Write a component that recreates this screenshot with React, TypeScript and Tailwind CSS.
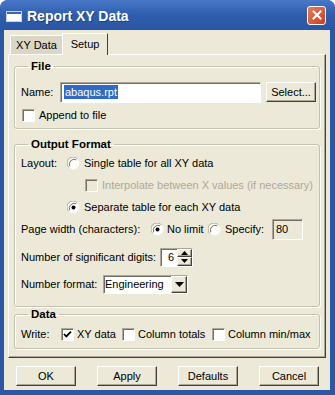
import React from 'react';

const raised =
  'border border-t-white border-l-white border-r-[#404040] border-b-[#404040] shadow-[inset_-1px_-1px_0_#ACA899]';
const sunken =
  'border border-t-[#ACA899] border-l-[#ACA899] border-r-white border-b-white shadow-[inset_1px_1px_0_#716F64]';

function Radio({ checked }: { checked?: boolean }) {
  return (
    <svg width="13" height="13" viewBox="0 0 13 13" className="shrink-0">
      <circle cx="6.5" cy="6.5" r="6" fill="#fff" stroke="#F1EFE2" />
      <path d="M1.7 10.2 A6 6 0 0 1 10.2 1.7" stroke="#ACA899" strokeWidth="1" fill="none" />
      <path d="M2.8 9.2 A4.8 4.8 0 0 1 9.2 2.8" stroke="#716F64" strokeWidth="1" fill="none" />
      {checked && <circle cx="6.5" cy="6.5" r="2" fill="#000" />}
    </svg>
  );
}

function Check({ checked, disabled }: { checked?: boolean; disabled?: boolean }) {
  return (
    <span
      className={`w-[13px] h-[13px] shrink-0 flex items-center justify-center ${sunken} ${
        disabled ? 'bg-[#ECE9D8]' : 'bg-white'
      }`}
    >
      {checked && (
        <svg width="9" height="9" viewBox="0 0 9 9">
          <path d="M1 4 L3.3 6.4 L8 1.6" stroke="#000" strokeWidth="1.8" fill="none" />
        </svg>
      )}
    </span>
  );
}

function Group({ title, className, children }: { title: string; className?: string; children: React.ReactNode }) {
  return (
    <fieldset
      className={`border border-[#C5C2B2] rounded-[3px] shadow-[inset_1px_1px_0_#fff,1px_1px_0_#fff] pl-[6px] ${className ?? ''}`}
    >
      <legend className="ml-[7px] px-[3px] font-bold text-[11.5px] leading-[13px]">{title}</legend>
      {children}
    </fieldset>
  );
}

function Button({ label, className }: { label: string; className?: string }) {
  return (
    <button type="button" className={`bg-[#ECE9D8] flex items-center justify-center ${raised} ${className ?? ''}`}>
      {label}
    </button>
  );
}

export default function App() {
  return (
    <div className="w-[335px] h-[395px] flex flex-col bg-[#2B57A6] rounded-t-[8px] overflow-hidden font-['Liberation_Sans',Arial,sans-serif] text-[11px] leading-[13px] text-black">
      {/* title bar */}
      <div className="h-[30px] shrink-0 flex items-center pl-[6px] pr-[9px] bg-gradient-to-b from-[#4A78C8] via-[#2F5DAE] to-[#2A56A3]">
        <svg width="16" height="11" viewBox="0 0 16 11" className="shrink-0 mt-[2px]">
          <rect x="0.5" y="0.5" width="15" height="10" fill="#fff" stroke="#C8D4EA" />
          <rect x="1" y="1" width="14" height="2" fill="#3A66B8" />
        </svg>
        <span className="ml-[5px] text-white font-bold text-[14px] leading-[16px] mt-[1px] [text-shadow:1px_1px_0_#1B3E80]">
          Report XY Data
        </span>
        <div className="ml-auto w-[19px] h-[19px] rounded-[3px] border border-white bg-gradient-to-br from-[#E8795A] to-[#C7401F] flex items-center justify-center">
          <svg width="10" height="10" viewBox="0 0 10 10">
            <path d="M1.5 1.5 L8.5 8.5 M8.5 1.5 L1.5 8.5" stroke="#fff" strokeWidth="2" strokeLinecap="square" />
          </svg>
        </div>
      </div>

      {/* client area */}
      <div className="flex-1 ml-[4px] mr-[5px] mb-[5px] bg-[#ECE9D8] flex flex-col">
        <div className="h-[24px] flex items-end pl-[6px]">
          <div className="w-[53px] h-[19px] bg-[#DAD7C6] border border-b-0 border-t-white border-l-white border-r-[#ACA899] flex items-center justify-center">
            XY Data
          </div>
          <div className="relative z-10 top-[1px] -ml-[1px] w-[46px] h-[22px] bg-[#ECE9D8] border-t border-l border-r border-t-white border-l-white border-r-[#404040] flex items-center justify-center pb-[1px]">
            Setup
          </div>
        </div>

        <div className="ml-[4px] w-[318px] h-[304px] border border-t-white border-l-white border-r-[#404040] border-b-[#404040] shadow-[inset_-1px_-1px_0_#ACA899] pl-[5px] pt-[5px]">
          <Group title="File" className="w-[306px] pb-[2px]">
            <div className="h-[22px] mt-[8px] flex items-center">
              <span className="w-[39px]">Name:</span>
              <div className={`w-[201px] h-[21px] bg-white flex items-center pl-[3px] ${sunken}`}>
                <span className="bg-[#316AC5] text-white px-[1px] leading-[14px]">abaqus.rpt</span>
              </div>
              <Button label="Select..." className="ml-[5px] w-[50px] h-[20px]" />
            </div>
            <div className="h-[22px] mt-[1px] flex items-center pl-[1px]">
              <Check />
              <span className="ml-[4px]">Append to file</span>
            </div>
          </Group>

          <Group title="Output Format" className="w-[306px] mt-[9px] pb-[11px]">
            <div className="h-[22px] mt-[1px] flex items-center">
              <span className="w-[46px]">Layout:</span>
              <Radio />
              <span className="ml-[4px]">Single table for all XY data</span>
            </div>
            <div className="h-[22px] flex items-center pl-[64px]">
              <Check disabled />
              <span className="ml-[4px] text-[#ACA899]">Interpolate between X values (if necessary)</span>
            </div>
            <div className="h-[22px] flex items-center pl-[46px]">
              <Radio checked />
              <span className="ml-[4px]">Separate table for each XY data</span>
            </div>
            <div className="h-[22px] flex items-center">
              <span className="w-[130px]">Page width (characters):</span>
              <Radio checked />
              <span className="ml-[3px] w-[41px]">No limit</span>
              <Radio />
              <span className="ml-[4px] w-[47px]">Specify:</span>
              <div className={`w-[31px] h-[21px] flex items-center pl-[3px] bg-[#ECE9D8] ${sunken}`}>80</div>
            </div>
            <div className="h-[22px] mt-[6px] flex items-center">
              <span className="w-[139px]">Number of significant digits:</span>
              <div className={`w-[33px] h-[19px] bg-white flex items-stretch ${sunken}`}>
                <span className="flex-1 flex items-center justify-end pr-[3px]">6</span>
                <div className="w-[15px] flex flex-col">
                  <div className={`flex-1 bg-[#ECE9D8] flex items-center justify-center ${raised}`}>
                    <svg width="7" height="4" viewBox="0 0 7 4">
                      <path d="M0 4 L3.5 0 L7 4 Z" fill="#000" />
                    </svg>
                  </div>
                  <div className={`flex-1 bg-[#ECE9D8] flex items-center justify-center ${raised}`}>
                    <svg width="7" height="4" viewBox="0 0 7 4">
                      <path d="M0 0 L3.5 4 L7 0 Z" fill="#000" />
                    </svg>
                  </div>
                </div>
              </div>
            </div>
            <div className="h-[22px] mt-[5px] flex items-center">
              <span className="w-[82px]">Number format:</span>
              <div className={`w-[85px] h-[19px] bg-white flex items-stretch ${sunken}`}>
                <span className="flex-1 flex items-center pl-[1px]">Engineering</span>
                <div className={`w-[16px] bg-[#ECE9D8] flex items-center justify-center ${raised}`}>
                  <svg width="9" height="5" viewBox="0 0 9 5">
                    <path d="M0 0 L4.5 5 L9 0 Z" fill="#000" />
                  </svg>
                </div>
              </div>
            </div>
          </Group>

          <Group title="Data" className="w-[306px] mt-[1px] pb-[3px]">
            <div className="h-[22px] mt-[2px] flex items-center">
              <span className="w-[40px]">Write:</span>
              <Check checked />
              <span className="ml-[3px] w-[45px]">XY data</span>
              <Check />
              <span className="ml-[3px] w-[74px]">Column totals</span>
              <Check />
              <span className="ml-[3px]">Column min/max</span>
            </div>
          </Group>
        </div>

        <div className="mt-[8px] flex pl-[12px] gap-[21px]">
          <Button label="OK" className="w-[60px] h-[20px]" />
          <Button label="Apply" className="w-[60px] h-[20px]" />
          <Button label="Defaults" className="w-[60px] h-[20px]" />
          <Button label="Cancel" className="w-[60px] h-[20px]" />
        </div>
      </div>
    </div>
  );
}
